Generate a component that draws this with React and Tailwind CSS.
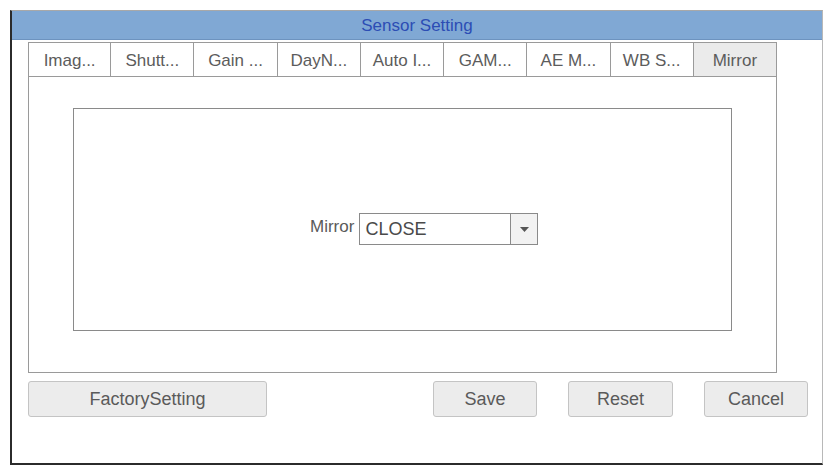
import React, { useState } from "react";

const tabs = ["Imag...", "Shutt...", "Gain ...", "DayN...", "Auto I...", "GAM...", "AE M...", "WB S...", "Mirror"];

const Button = ({ label, className }) => (
  <button
    type="button"
    className={
      "h-[36px] rounded-[3px] border border-[#c4c4c4] bg-[#ececec] text-[18px] text-[#5a5a5a] " +
      className
    }
  >
    {label}
  </button>
);

const App = () => {
  const [active, setActive] = useState(8);
  const [mirror] = useState("CLOSE");

  return (
    <div className="w-[826px] h-[468px] bg-white font-['Liberation_Sans',Arial,sans-serif] overflow-hidden">
      <div className="pl-[10px] pt-[10px]">
        <div className="w-[813px] h-[455px] flex flex-col border-t border-t-[#a8a8a8] border-r border-r-[#b8b8b8] border-l-2 border-l-[#2b2b2b] border-b-2 border-b-[#2b2b2b]">
          {/* title bar */}
          <div className="h-[29px] bg-[#80a8d4] border-b border-b-[#6d93bf] text-center text-[17px] leading-[29px] text-[#2c4db4]">
            Sensor Setting
          </div>

          {/* tabs */}
          <div className="ml-[16px] mt-[2px] w-[749px] grid grid-cols-9">
            {tabs.map((t, i) => (
              <div
                key={t}
                onClick={() => setActive(i)}
                className={
                  "h-[34px] pt-[2px] border-t border-r border-[#9a9a9a] text-center text-[17px] leading-[32px] text-[#5c5c5c] " +
                  (i === 0 ? "border-l " : "") +
                  (i === active ? "bg-[#ebebeb]" : "bg-white")
                }
              >
                {t}
              </div>
            ))}
          </div>

          {/* panel */}
          <div className="ml-[16px] w-[749px] h-[297px] border border-[#9a9a9a] pt-[31px] pl-[44px]">
            <div className="w-[659px] h-[223px] border border-[#8a8a8a] pt-[104px] pl-[236px]">
              <div className="flex items-center">
                <span className="text-[17px] text-[#5a5a5a] mr-[5px] -mt-[4px]">Mirror</span>
                <div className="w-[179px] h-[32px] border border-[#8a8a8a] flex">
                  <div className="flex-1 pl-[5px] text-[18px] leading-[30px] text-[#4a4a4a]">{mirror}</div>
                  <div className="w-[27px] border-l border-[#8a8a8a] bg-[#f2f2f2] flex items-center justify-center">
                    <svg width="9" height="5" viewBox="0 0 9 5">
                      <path d="M0 0 L9 0 L4.5 5 Z" fill="#555" />
                    </svg>
                  </div>
                </div>
              </div>
            </div>
          </div>

          {/* buttons */}
          <div className="ml-[16px] mt-[8px] flex">
            <Button label="FactorySetting" className="w-[239px]" />
            <Button label="Save" className="w-[104px] ml-[166px]" />
            <Button label="Reset" className="w-[105px] ml-[31px]" />
            <Button label="Cancel" className="w-[104px] ml-[31px]" />
          </div>
        </div>
      </div>
    </div>
  );
};

export default App;
